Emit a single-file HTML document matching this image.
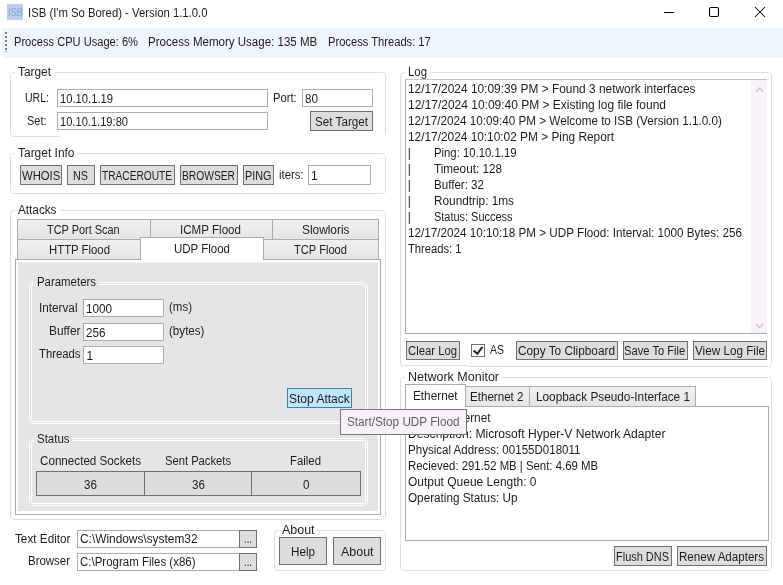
<!DOCTYPE html>
<html lang="en"><head><meta charset="utf-8"><title>ISB (I'm So Bored) - Version 1.1.0.0</title>
<style>
html,body{margin:0;padding:0;background:#fff;}
body{width:783px;height:585px;position:relative;overflow:hidden;font-family:"Liberation Sans", sans-serif;font-size:12px;}
#win{position:absolute;left:0;top:0;width:783px;height:585px;will-change:transform;}
.b{position:absolute;box-sizing:border-box;}
.t{position:absolute;white-space:pre;transform-origin:0 0;}
</style></head>
<body>
<div id="win">
<div class="b " style="left:7px;top:4px;width:16px;height:16px;background:#BDCDEC;"></div>
<span class="t" style="left:8px;top:4.85px;color:#86A9DC;font-size:11px;line-height:14.67px;transform:scaleX(0.8176);font-style:italic;">ISB</span>
<span class="t" style="left:28px;top:4.84px;color:#1c1c1c;font-size:12px;line-height:16.00px;transform:scaleX(0.9428);">ISB (I'm So Bored) - Version 1.1.0.0</span>
<svg class="b" style="left:655px;top:0;width:128px;height:28px" viewBox="0 0 128 28" width="128" height="28"><path d="M9 12.5H19" stroke="#000" stroke-width="1" fill="none"/><rect x="54.5" y="7.5" width="9" height="9" rx="1.5" ry="1.5" stroke="#000" stroke-width="1.1" fill="none"/><path d="M100 7L110 17M110 7L100 17" stroke="#000" stroke-width="1.05" fill="none"/></svg>
<div class="b " style="left:2px;top:28px;width:783px;height:30px;background:#EEF5FD;border-radius:3px 0 0 3px;"></div>
<div class="b " style="left:5px;top:32px;width:2px;height:2px;background:#7a7a7a;"></div>
<div class="b " style="left:5px;top:36px;width:2px;height:2px;background:#7a7a7a;"></div>
<div class="b " style="left:5px;top:40px;width:2px;height:2px;background:#7a7a7a;"></div>
<div class="b " style="left:5px;top:44px;width:2px;height:2px;background:#7a7a7a;"></div>
<div class="b " style="left:5px;top:48px;width:2px;height:2px;background:#7a7a7a;"></div>
<div class="b " style="left:5px;top:51px;width:2px;height:1px;background:#a9abae;"></div>
<span class="t" style="left:14px;top:33.84px;color:#1c1c1c;font-size:12px;line-height:16.00px;transform:scaleX(0.9249);">Process CPU Usage: 6%</span>
<span class="t" style="left:147.7px;top:33.84px;color:#1c1c1c;font-size:12px;line-height:16.00px;transform:scaleX(0.9616);">Process Memory Usage: 135 MB</span>
<span class="t" style="left:327.7px;top:33.84px;color:#1c1c1c;font-size:12px;line-height:16.00px;transform:scaleX(0.9302);">Process Threads: 17</span>
<div class="b" style="left:9px;top:71px;width:378px;height:67px;border:1px solid #fff;border-radius:5px;box-sizing:border-box;"></div>
<div class="b" style="left:10px;top:72px;width:376px;height:65px;border:1px solid #D5DFE5;border-radius:4px;box-sizing:border-box;"></div>
<div class="b" style="left:11px;top:73px;width:374px;height:63px;border:1px solid #fff;border-radius:3px;box-sizing:border-box;"></div>
<div class="b " style="left:59px;top:135px;width:329px;height:3px;background:#fff;"></div>
<div class="b " style="left:15px;top:71px;width:39px;height:3px;background:#fff;"></div>
<span class="t" style="left:18px;top:63.84px;color:#1c1c1c;font-size:12px;line-height:16.00px;transform:scaleX(0.9892);">Target</span>
<span class="t" style="left:25px;top:89.84px;color:#1c1c1c;font-size:12px;line-height:16.00px;transform:scaleX(0.8777);">URL:</span>
<div class="b " style="left:57px;top:89px;width:211px;height:18px;background:#fff;border:1px solid #ABADB3;box-sizing:border-box;"></div>
<span class="t" style="left:60px;top:90.54px;color:#1c1c1c;font-size:12px;line-height:16.00px;transform:scaleX(0.9344);">10.10.1.19</span>
<span class="t" style="left:272.8px;top:89.84px;color:#1c1c1c;font-size:12px;line-height:16.00px;transform:scaleX(0.9351);">Port:</span>
<div class="b " style="left:302px;top:89px;width:71px;height:18px;background:#fff;border:1px solid #ABADB3;box-sizing:border-box;"></div>
<span class="t" style="left:305px;top:90.54px;color:#1c1c1c;font-size:12px;line-height:16.00px;transform:scaleX(0.9731);">80</span>
<span class="t" style="left:27px;top:112.84px;color:#1c1c1c;font-size:12px;line-height:16.00px;transform:scaleX(0.9129);">Set:</span>
<div class="b " style="left:57px;top:112px;width:211px;height:18px;background:#fff;border:1px solid #ABADB3;box-sizing:border-box;"></div>
<span class="t" style="left:60px;top:113.54px;color:#1c1c1c;font-size:12px;line-height:16.00px;transform:scaleX(0.9264);">10.10.1.19:80</span>
<div class="b " style="left:310px;top:111px;width:63px;height:20px;background:#DDDDDD;border:1px solid #707070;box-sizing:border-box;"></div>
<span class="t" style="left:315px;top:113.84px;color:#1c1c1c;font-size:12px;line-height:16.00px;transform:scaleX(0.9728);">Set Target</span>
<div class="b" style="left:9px;top:152px;width:378px;height:43px;border:1px solid #fff;border-radius:5px;box-sizing:border-box;"></div>
<div class="b" style="left:10px;top:153px;width:376px;height:41px;border:1px solid #D5DFE5;border-radius:4px;box-sizing:border-box;"></div>
<div class="b" style="left:11px;top:154px;width:374px;height:39px;border:1px solid #fff;border-radius:3px;box-sizing:border-box;"></div>
<div class="b " style="left:15px;top:152px;width:62.5px;height:3px;background:#fff;"></div>
<span class="t" style="left:18px;top:144.84px;color:#1c1c1c;font-size:12px;line-height:16.00px;transform:scaleX(0.9964);">Target Info</span>
<div class="b " style="left:20px;top:165px;width:42px;height:20px;background:#DDDDDD;border:1px solid #707070;box-sizing:border-box;"></div>
<span class="t" style="left:22px;top:167.84px;color:#1c1c1c;font-size:12px;line-height:16.00px;transform:scaleX(0.9417);">WHOIS</span>
<div class="b " style="left:67px;top:165px;width:28px;height:20px;background:#DDDDDD;border:1px solid #707070;box-sizing:border-box;"></div>
<span class="t" style="left:73px;top:167.84px;color:#1c1c1c;font-size:12px;line-height:16.00px;transform:scaleX(0.8997);">NS</span>
<div class="b " style="left:100px;top:165px;width:75px;height:20px;background:#DDDDDD;border:1px solid #707070;box-sizing:border-box;"></div>
<span class="t" style="left:102px;top:167.84px;color:#1c1c1c;font-size:12px;line-height:16.00px;transform:scaleX(0.8467);">TRACEROUTE</span>
<div class="b " style="left:180px;top:165px;width:58px;height:20px;background:#DDDDDD;border:1px solid #707070;box-sizing:border-box;"></div>
<span class="t" style="left:182px;top:167.84px;color:#1c1c1c;font-size:12px;line-height:16.00px;transform:scaleX(0.8546);">BROWSER</span>
<div class="b " style="left:243px;top:165px;width:31px;height:20px;background:#DDDDDD;border:1px solid #707070;box-sizing:border-box;"></div>
<span class="t" style="left:245px;top:167.84px;color:#1c1c1c;font-size:12px;line-height:16.00px;transform:scaleX(0.9031);">PING</span>
<span class="t" style="left:278.7px;top:167.34px;color:#1c1c1c;font-size:12px;line-height:16.00px;transform:scaleX(0.9417);">iters:</span>
<div class="b " style="left:308px;top:165px;width:63px;height:20px;background:#fff;border:1px solid #ABADB3;box-sizing:border-box;"></div>
<span class="t" style="left:311px;top:167.84px;color:#1c1c1c;font-size:12px;line-height:16.00px;">1</span>
<div class="b" style="left:9px;top:209px;width:378px;height:312px;border:1px solid #fff;border-radius:5px;box-sizing:border-box;"></div>
<div class="b" style="left:10px;top:210px;width:376px;height:310px;border:1px solid #D5DFE5;border-radius:4px;box-sizing:border-box;"></div>
<div class="b" style="left:11px;top:211px;width:374px;height:308px;border:1px solid #fff;border-radius:3px;box-sizing:border-box;"></div>
<div class="b " style="left:15px;top:209px;width:44.5px;height:3px;background:#fff;"></div>
<span class="t" style="left:18px;top:201.84px;color:#1c1c1c;font-size:12px;line-height:16.00px;transform:scaleX(0.9782);">Attacks</span>
<div class="b " style="left:17px;top:219px;width:134px;height:20px;background:linear-gradient(#F0F0F0,#E5E5E5);border:1px solid #ACACAC;border-bottom:none;box-sizing:border-box;"></div>
<div class="b " style="left:150px;top:219px;width:123px;height:20px;background:linear-gradient(#F0F0F0,#E5E5E5);border:1px solid #ACACAC;border-bottom:none;box-sizing:border-box;"></div>
<div class="b " style="left:272px;top:219px;width:107px;height:20px;background:linear-gradient(#F0F0F0,#E5E5E5);border:1px solid #ACACAC;border-bottom:none;box-sizing:border-box;"></div>
<span class="t" style="left:46.8px;top:221.84px;color:#1c1c1c;font-size:12px;line-height:16.00px;transform:scaleX(0.9109);">TCP Port Scan</span>
<span class="t" style="left:180px;top:221.84px;color:#1c1c1c;font-size:12px;line-height:16.00px;transform:scaleX(0.9661);">ICMP Flood</span>
<span class="t" style="left:301.5px;top:221.84px;color:#1c1c1c;font-size:12px;line-height:16.00px;transform:scaleX(0.9893);">Slowloris</span>
<div class="b " style="left:17px;top:239px;width:124px;height:20px;background:linear-gradient(#F0F0F0,#E5E5E5);border:1px solid #ACACAC;border-bottom:none;box-sizing:border-box;"></div>
<div class="b " style="left:263px;top:239px;width:116px;height:20px;background:linear-gradient(#F0F0F0,#E5E5E5);border:1px solid #ACACAC;border-bottom:none;box-sizing:border-box;"></div>
<span class="t" style="left:49px;top:241.84px;color:#1c1c1c;font-size:12px;line-height:16.00px;transform:scaleX(0.9462);">HTTP Flood</span>
<span class="t" style="left:294px;top:241.84px;color:#1c1c1c;font-size:12px;line-height:16.00px;transform:scaleX(0.9275);">TCP Flood</span>
<div class="b " style="left:15px;top:259px;width:366px;height:256px;background:#fff;border:1px solid #ACACAC;box-sizing:border-box;"></div>
<div class="b " style="left:18px;top:262px;width:360px;height:249px;background:#F0F0F0;"></div>
<div class="b " style="left:18px;top:263px;width:360px;height:248px;background:#E5E5E5;"></div>
<div class="b " style="left:140px;top:237px;width:124px;height:23px;background:#fff;border:1px solid #ACACAC;border-bottom:none;box-sizing:border-box;"></div>
<span class="t" style="left:173.5px;top:240.84px;color:#1c1c1c;font-size:12px;line-height:16.00px;transform:scaleX(0.9575);">UDP Flood</span>
<div class="b" style="left:29px;top:282px;width:339px;height:142px;border:1px solid #fff;border-radius:5px;box-sizing:border-box;"></div>
<div class="b" style="left:30px;top:283px;width:337px;height:140px;border:1px solid #DCE4EB;border-radius:4px;box-sizing:border-box;"></div>
<div class="b" style="left:31px;top:284px;width:335px;height:138px;border:1px solid #fff;border-radius:3px;box-sizing:border-box;"></div>
<div class="b " style="left:34px;top:282px;width:65px;height:3px;background:#E5E5E5;"></div>
<span class="t" style="left:37px;top:274.34px;color:#1c1c1c;font-size:12px;line-height:16.00px;transform:scaleX(0.9511);">Parameters</span>
<span class="t" style="left:39px;top:299.84px;color:#1c1c1c;font-size:12px;line-height:16.00px;transform:scaleX(0.9782);">Interval</span>
<div class="b " style="left:83px;top:299px;width:81px;height:18px;background:#fff;border:1px solid #ABADB3;box-sizing:border-box;"></div>
<span class="t" style="left:86px;top:300.64px;color:#1c1c1c;font-size:12px;line-height:16.00px;transform:scaleX(0.9737);">1000</span>
<span class="t" style="left:169px;top:299.24px;color:#1c1c1c;font-size:12px;line-height:16.00px;transform:scaleX(0.9583);">(ms)</span>
<span class="t" style="left:49px;top:323.04px;color:#1c1c1c;font-size:12px;line-height:16.00px;transform:scaleX(0.9902);">Buffer</span>
<div class="b " style="left:83px;top:323px;width:81px;height:18px;background:#fff;border:1px solid #ABADB3;box-sizing:border-box;"></div>
<span class="t" style="left:86px;top:324.64px;color:#1c1c1c;font-size:12px;line-height:16.00px;transform:scaleX(0.9735);">256</span>
<span class="t" style="left:169px;top:323.04px;color:#1c1c1c;font-size:12px;line-height:16.00px;transform:scaleX(0.9676);">(bytes)</span>
<span class="t" style="left:39px;top:346.44px;color:#1c1c1c;font-size:12px;line-height:16.00px;transform:scaleX(0.9425);">Threads</span>
<div class="b " style="left:83px;top:346px;width:81px;height:18px;background:#fff;border:1px solid #ABADB3;box-sizing:border-box;"></div>
<span class="t" style="left:86.5px;top:348.14px;color:#1c1c1c;font-size:12px;line-height:16.00px;">1</span>
<div class="b " style="left:287px;top:388px;width:65px;height:20px;background:#BEE6FD;border:1px solid #3C7FB1;box-sizing:border-box;"></div>
<span class="t" style="left:288.7px;top:390.84px;color:#1c1c1c;font-size:12px;line-height:16.00px;transform:scaleX(1.0016);">Stop Attack</span>
<div class="b" style="left:29px;top:438px;width:339px;height:68px;border:1px solid #fff;border-radius:5px;box-sizing:border-box;"></div>
<div class="b" style="left:30px;top:439px;width:337px;height:66px;border:1px solid #DCE4EB;border-radius:4px;box-sizing:border-box;"></div>
<div class="b" style="left:31px;top:440px;width:335px;height:64px;border:1px solid #fff;border-radius:3px;box-sizing:border-box;"></div>
<div class="b " style="left:34px;top:438px;width:38.5px;height:3px;background:#E5E5E5;"></div>
<span class="t" style="left:37px;top:430.84px;color:#1c1c1c;font-size:12px;line-height:16.00px;transform:scaleX(0.9550);">Status</span>
<span class="t" style="left:39.5px;top:452.84px;color:#1c1c1c;font-size:12px;line-height:16.00px;transform:scaleX(0.9706);">Connected Sockets</span>
<span class="t" style="left:165px;top:452.84px;color:#1c1c1c;font-size:12px;line-height:16.00px;transform:scaleX(0.9333);">Sent Packets</span>
<span class="t" style="left:289.5px;top:452.84px;color:#1c1c1c;font-size:12px;line-height:16.00px;transform:scaleX(0.9484);">Failed</span>
<div class="b " style="left:36px;top:471px;width:325px;height:25px;background:#DDDDDD;border:1px solid #707070;box-sizing:border-box;"></div>
<div class="b " style="left:144px;top:472px;width:1px;height:23px;background:#707070;"></div>
<div class="b " style="left:251px;top:472px;width:1px;height:23px;background:#707070;"></div>
<span class="t" style="left:84px;top:476.84px;color:#1c1c1c;font-size:12px;line-height:16.00px;transform:scaleX(0.9731);">36</span>
<span class="t" style="left:191.5px;top:476.84px;color:#1c1c1c;font-size:12px;line-height:16.00px;transform:scaleX(0.9731);">36</span>
<span class="t" style="left:303px;top:476.84px;color:#1c1c1c;font-size:12px;line-height:16.00px;transform:scaleX(0.9720);">0</span>
<span class="t" style="left:14.5px;top:531.24px;color:#1c1c1c;font-size:12px;line-height:16.00px;transform:scaleX(0.9788);">Text Editor</span>
<div class="b " style="left:77px;top:530px;width:163px;height:18px;background:#fff;border:1px solid #ABADB3;box-sizing:border-box;"></div>
<span class="t" style="left:80px;top:530.84px;color:#1c1c1c;font-size:12px;line-height:16.00px;transform:scaleX(0.9899);">C:\Windows\system32</span>
<div class="b " style="left:239px;top:530px;width:18px;height:18px;background:#DDDDDD;border:1px solid #707070;box-sizing:border-box;"></div>
<span class="t" style="left:244px;top:530.84px;color:#1c1c1c;font-size:12px;line-height:16.00px;transform:scaleX(0.7988);">...</span>
<span class="t" style="left:27.7px;top:552.84px;color:#1c1c1c;font-size:12px;line-height:16.00px;transform:scaleX(0.9542);">Browser</span>
<div class="b " style="left:77px;top:553px;width:163px;height:18px;background:#fff;border:1px solid #ABADB3;box-sizing:border-box;"></div>
<span class="t" style="left:80px;top:553.84px;color:#1c1c1c;font-size:12px;line-height:16.00px;transform:scaleX(0.9569);">C:\Program Files (x86)</span>
<div class="b " style="left:239px;top:553px;width:18px;height:18px;background:#DDDDDD;border:1px solid #707070;box-sizing:border-box;"></div>
<span class="t" style="left:244px;top:553.84px;color:#1c1c1c;font-size:12px;line-height:16.00px;transform:scaleX(0.7988);">...</span>
<div class="b" style="left:273px;top:529px;width:114px;height:43px;border:1px solid #fff;border-radius:5px;box-sizing:border-box;"></div>
<div class="b" style="left:274px;top:530px;width:112px;height:41px;border:1px solid #D5DFE5;border-radius:4px;box-sizing:border-box;"></div>
<div class="b" style="left:275px;top:531px;width:110px;height:39px;border:1px solid #fff;border-radius:3px;box-sizing:border-box;"></div>
<div class="b " style="left:279px;top:529px;width:38.5px;height:3px;background:#fff;"></div>
<span class="t" style="left:282px;top:521.64px;color:#1c1c1c;font-size:12px;line-height:16.00px;transform:scaleX(1.0364);">About</span>
<div class="b " style="left:279px;top:537px;width:48px;height:28px;background:#DDDDDD;border:1px solid #707070;box-sizing:border-box;"></div>
<span class="t" style="left:291px;top:543.84px;color:#1c1c1c;font-size:12px;line-height:16.00px;transform:scaleX(0.9722);">Help</span>
<div class="b " style="left:333px;top:537px;width:48px;height:28px;background:#DDDDDD;border:1px solid #707070;box-sizing:border-box;"></div>
<span class="t" style="left:340.5px;top:543.84px;color:#1c1c1c;font-size:12px;line-height:16.00px;transform:scaleX(1.0364);">About</span>
<div class="b" style="left:399px;top:71px;width:374px;height:297px;border:1px solid #fff;border-radius:5px;box-sizing:border-box;"></div>
<div class="b" style="left:400px;top:72px;width:372px;height:295px;border:1px solid #D5DFE5;border-radius:4px;box-sizing:border-box;"></div>
<div class="b" style="left:401px;top:73px;width:370px;height:293px;border:1px solid #fff;border-radius:3px;box-sizing:border-box;"></div>
<div class="b " style="left:405px;top:71px;width:25px;height:3px;background:#fff;"></div>
<span class="t" style="left:408px;top:63.84px;color:#1c1c1c;font-size:12px;line-height:16.00px;transform:scaleX(0.9485);">Log</span>
<div class="b " style="left:404px;top:365px;width:63px;height:3px;background:#fff;"></div>
<div class="b " style="left:404px;top:365px;width:63px;height:1px;background:#D5DFE5;"></div>
<div class="b " style="left:405px;top:79px;width:362px;height:255px;background:#fff;border:1px solid #ABADB3;border-top-color:#BFC1CB;border-right:none;box-sizing:border-box;"></div>
<div class="b " style="left:751px;top:80px;width:16px;height:253px;background:#F6F2F7;"></div>
<svg class="b" style="left:751px;top:80px;width:16px;height:253px" viewBox="0 0 16 253" width="16" height="253"><path d="M5 11.8L8.5 8L12 11.8" stroke="#C8C8C8" stroke-width="1.4" fill="none"/><path d="M5 243.8L8.5 247.4L12 243.8" stroke="#C8C8C8" stroke-width="1.4" fill="none"/></svg>
<span class="t" style="left:407.7px;top:80.84px;color:#1c1c1c;font-size:12px;line-height:16.00px;transform:scaleX(0.9919);">12/17/2024 10:09:39 PM &gt; Found 3 network interfaces</span>
<span class="t" style="left:407.7px;top:96.84px;color:#1c1c1c;font-size:12px;line-height:16.00px;transform:scaleX(0.9980);">12/17/2024 10:09:40 PM &gt; Existing log file found</span>
<span class="t" style="left:407.7px;top:112.84px;color:#1c1c1c;font-size:12px;line-height:16.00px;transform:scaleX(0.9742);">12/17/2024 10:09:40 PM &gt; Welcome to ISB (Version 1.1.0.0)</span>
<span class="t" style="left:407.7px;top:128.84px;color:#1c1c1c;font-size:12px;line-height:16.00px;transform:scaleX(0.9881);">12/17/2024 10:10:02 PM &gt; Ping Report</span>
<span class="t" style="left:407.7px;top:144.84px;color:#1c1c1c;font-size:12px;line-height:16.00px;">|</span>
<span class="t" style="left:434px;top:144.84px;color:#1c1c1c;font-size:12px;line-height:16.00px;transform:scaleX(0.9439);">Ping: 10.10.1.19</span>
<span class="t" style="left:407.7px;top:160.84px;color:#1c1c1c;font-size:12px;line-height:16.00px;">|</span>
<span class="t" style="left:434px;top:160.84px;color:#1c1c1c;font-size:12px;line-height:16.00px;transform:scaleX(0.9771);">Timeout: 128</span>
<span class="t" style="left:407.7px;top:176.84px;color:#1c1c1c;font-size:12px;line-height:16.00px;">|</span>
<span class="t" style="left:434px;top:176.84px;color:#1c1c1c;font-size:12px;line-height:16.00px;transform:scaleX(0.9647);">Buffer: 32</span>
<span class="t" style="left:407.7px;top:192.84px;color:#1c1c1c;font-size:12px;line-height:16.00px;">|</span>
<span class="t" style="left:434px;top:192.84px;color:#1c1c1c;font-size:12px;line-height:16.00px;transform:scaleX(0.9831);">Roundtrip: 1ms</span>
<span class="t" style="left:407.7px;top:208.84px;color:#1c1c1c;font-size:12px;line-height:16.00px;">|</span>
<span class="t" style="left:434px;top:208.84px;color:#1c1c1c;font-size:12px;line-height:16.00px;transform:scaleX(0.9123);">Status: Success</span>
<span class="t" style="left:407.7px;top:224.84px;color:#1c1c1c;font-size:12px;line-height:16.00px;transform:scaleX(0.9737);">12/17/2024 10:10:18 PM &gt; UDP Flood: Interval: 1000 Bytes: 256</span>
<span class="t" style="left:407.7px;top:240.84px;color:#1c1c1c;font-size:12px;line-height:16.00px;transform:scaleX(0.9325);">Threads: 1</span>
<div class="b " style="left:406px;top:341px;width:54px;height:19px;background:#DDDDDD;border:1px solid #707070;box-sizing:border-box;"></div>
<span class="t" style="left:407.7px;top:343.34px;color:#1c1c1c;font-size:12px;line-height:16.00px;transform:scaleX(0.9417);">Clear Log</span>
<div class="b " style="left:471px;top:344px;width:14px;height:13px;background:#fff;border:1px solid #707070;box-sizing:border-box;"></div>
<svg class="b" style="left:471px;top:344px;width:14px;height:13px" viewBox="0 0 14 13" width="14" height="13"><path d="M2.6 6.4L6.4 9.8L11.4 2.8" stroke="#212121" stroke-width="2" fill="none"/></svg>
<span class="t" style="left:489.7px;top:341.84px;color:#1c1c1c;font-size:12px;line-height:16.00px;transform:scaleX(0.8741);">AS</span>
<div class="b " style="left:516px;top:341px;width:102px;height:19px;background:#DDDDDD;border:1px solid #707070;box-sizing:border-box;"></div>
<span class="t" style="left:517.7px;top:343.34px;color:#1c1c1c;font-size:12px;line-height:16.00px;transform:scaleX(0.9846);">Copy To Clipboard</span>
<div class="b " style="left:623px;top:341px;width:65px;height:19px;background:#DDDDDD;border:1px solid #707070;box-sizing:border-box;"></div>
<span class="t" style="left:624.4px;top:343.34px;color:#1c1c1c;font-size:12px;line-height:16.00px;transform:scaleX(0.9314);">Save To File</span>
<div class="b " style="left:693px;top:341px;width:74px;height:19px;background:#DDDDDD;border:1px solid #707070;box-sizing:border-box;"></div>
<span class="t" style="left:694.7px;top:343.34px;color:#1c1c1c;font-size:12px;line-height:16.00px;transform:scaleX(0.9745);">View Log File</span>
<div class="b" style="left:399px;top:376px;width:374px;height:196px;border:1px solid #fff;border-radius:5px;box-sizing:border-box;"></div>
<div class="b" style="left:400px;top:377px;width:372px;height:194px;border:1px solid #D5DFE5;border-radius:4px;box-sizing:border-box;"></div>
<div class="b" style="left:401px;top:378px;width:370px;height:192px;border:1px solid #fff;border-radius:3px;box-sizing:border-box;"></div>
<div class="b " style="left:405px;top:376px;width:97px;height:3px;background:#fff;"></div>
<span class="t" style="left:408px;top:368.84px;color:#1c1c1c;font-size:12px;line-height:16.00px;transform:scaleX(1.0417);">Network Monitor</span>
<div class="b " style="left:465px;top:386px;width:65px;height:20px;background:linear-gradient(#F0F0F0,#E5E5E5);border:1px solid #ACACAC;border-bottom:none;box-sizing:border-box;"></div>
<div class="b " style="left:529px;top:386px;width:167px;height:20px;background:linear-gradient(#F0F0F0,#E5E5E5);border:1px solid #ACACAC;border-bottom:none;box-sizing:border-box;"></div>
<span class="t" style="left:469.7px;top:388.84px;color:#1c1c1c;font-size:12px;line-height:16.00px;transform:scaleX(0.9661);">Ethernet 2</span>
<span class="t" style="left:535.5px;top:388.84px;color:#1c1c1c;font-size:12px;line-height:16.00px;transform:scaleX(0.9823);">Loopback Pseudo-Interface 1</span>
<div class="b " style="left:405px;top:406px;width:364px;height:135px;background:#fff;border:1px solid #ACACAC;box-sizing:border-box;"></div>
<div class="b " style="left:405px;top:384px;width:61px;height:23px;background:#fff;border:1px solid #ACACAC;border-bottom:none;box-sizing:border-box;"></div>
<span class="t" style="left:413px;top:387.84px;color:#1c1c1c;font-size:12px;line-height:16.00px;transform:scaleX(0.9807);">Ethernet</span>
<span class="t" style="left:407.7px;top:409.84px;color:#1c1c1c;font-size:12px;line-height:16.00px;transform:scaleX(0.9816);">Name: Ethernet</span>
<span class="t" style="left:407.7px;top:425.84px;color:#1c1c1c;font-size:12px;line-height:16.00px;transform:scaleX(1.0107);">Description: Microsoft Hyper-V Network Adapter</span>
<span class="t" style="left:407.7px;top:441.84px;color:#1c1c1c;font-size:12px;line-height:16.00px;transform:scaleX(0.9624);">Physical Address: 00155D018011</span>
<span class="t" style="left:407.7px;top:457.84px;color:#1c1c1c;font-size:12px;line-height:16.00px;transform:scaleX(0.9473);">Recieved: 291.52 MB | Sent: 4.69 MB</span>
<span class="t" style="left:407.7px;top:473.84px;color:#1c1c1c;font-size:12px;line-height:16.00px;transform:scaleX(0.9979);">Output Queue Length: 0</span>
<span class="t" style="left:407.7px;top:489.84px;color:#1c1c1c;font-size:12px;line-height:16.00px;transform:scaleX(0.9771);">Operating Status: Up</span>
<div class="b " style="left:614px;top:546px;width:58px;height:20px;background:#DDDDDD;border:1px solid #707070;box-sizing:border-box;"></div>
<span class="t" style="left:615.7px;top:548.84px;color:#1c1c1c;font-size:12px;line-height:16.00px;transform:scaleX(0.9135);">Flush DNS</span>
<div class="b " style="left:677px;top:546px;width:90px;height:20px;background:#DDDDDD;border:1px solid #707070;box-sizing:border-box;"></div>
<span class="t" style="left:678.5px;top:548.84px;color:#1c1c1c;font-size:12px;line-height:16.00px;transform:scaleX(0.9652);">Renew Adapters</span>
<div class="b " style="left:340px;top:409px;width:127px;height:26px;background:#F7F2F7;border:1px solid #767676;box-sizing:border-box;"></div>
<span class="t" style="left:346.5px;top:414.44px;color:#5e5e5e;font-size:12px;line-height:16.00px;transform:scaleX(0.9768);">Start/Stop UDP Flood</span>
</div>
</body></html>
